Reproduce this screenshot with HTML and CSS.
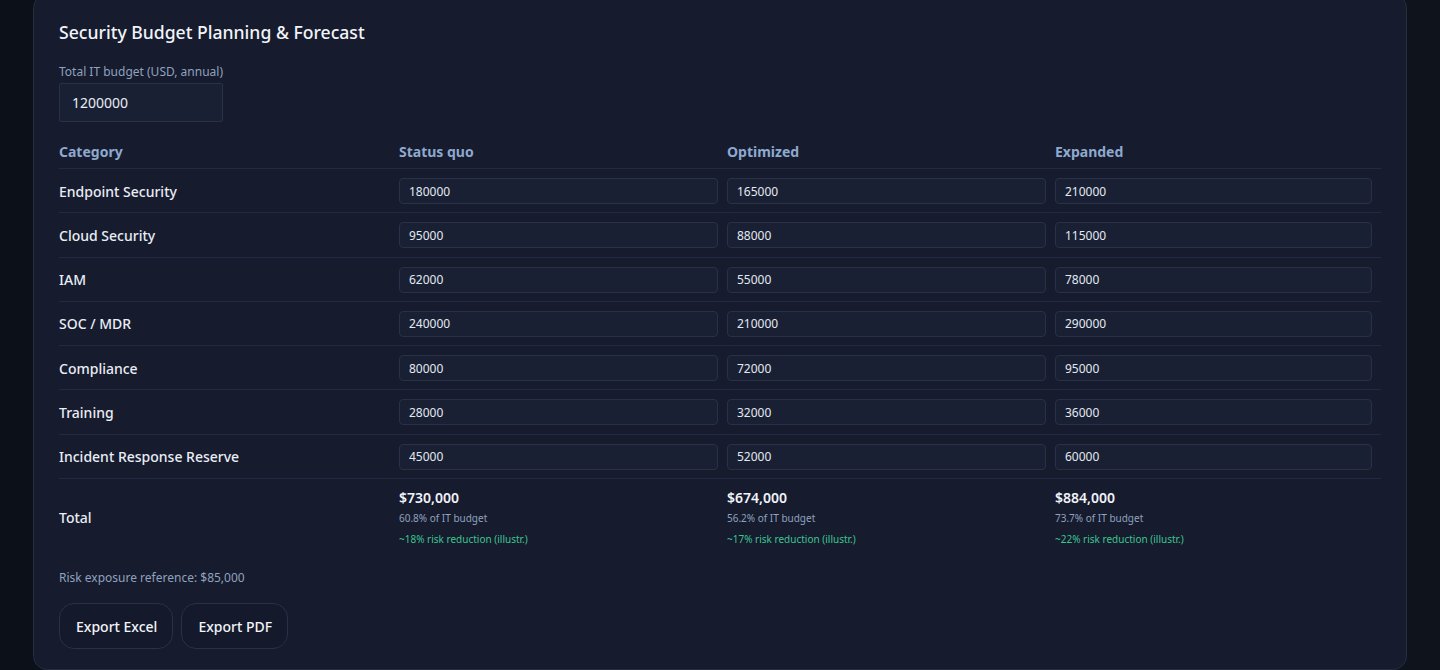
FILE: index.html
```html
<!DOCTYPE html>
<html lang="en">
<head>
    <meta charset="UTF-8">
    <meta name="viewport" content="width=device-width, initial-scale=1.0">
    <title>Security Budget Planning &amp; Forecast</title>
    <link rel="stylesheet" href="styles.css">
</head>
<body>
    <div class="card">
        <h2>Security Budget Planning &amp; Forecast</h2>

        <div class="field">
            <label for="it-budget">Total IT budget (USD, annual)</label>
            <input type="text" id="it-budget" class="budget-input" value="1200000">
        </div>

        <table class="budget-table">
            <colgroup>
                <col class="col-cat">
                <col class="col-val">
                <col class="col-val">
                <col>
            </colgroup>
            <thead>
                <tr>
                    <th>Category</th>
                    <th>Status quo</th>
                    <th>Optimized</th>
                    <th>Expanded</th>
                </tr>
            </thead>
            <tbody>
                <tr>
                    <td class="cat">Endpoint Security</td>
                    <td><input type="text" value="180000"></td>
                    <td><input type="text" value="165000"></td>
                    <td><input type="text" value="210000"></td>
                </tr>
                <tr>
                    <td class="cat">Cloud Security</td>
                    <td><input type="text" value="95000"></td>
                    <td><input type="text" value="88000"></td>
                    <td><input type="text" value="115000"></td>
                </tr>
                <tr>
                    <td class="cat">IAM</td>
                    <td><input type="text" value="62000"></td>
                    <td><input type="text" value="55000"></td>
                    <td><input type="text" value="78000"></td>
                </tr>
                <tr>
                    <td class="cat">SOC / MDR</td>
                    <td><input type="text" value="240000"></td>
                    <td><input type="text" value="210000"></td>
                    <td><input type="text" value="290000"></td>
                </tr>
                <tr>
                    <td class="cat">Compliance</td>
                    <td><input type="text" value="80000"></td>
                    <td><input type="text" value="72000"></td>
                    <td><input type="text" value="95000"></td>
                </tr>
                <tr>
                    <td class="cat">Training</td>
                    <td><input type="text" value="28000"></td>
                    <td><input type="text" value="32000"></td>
                    <td><input type="text" value="36000"></td>
                </tr>
                <tr>
                    <td class="cat">Incident Response Reserve</td>
                    <td><input type="text" value="45000"></td>
                    <td><input type="text" value="52000"></td>
                    <td><input type="text" value="60000"></td>
                </tr>
                <tr class="total-row">
                    <td class="cat">Total</td>
                    <td>
                        <div class="amount">$730,000</div>
                        <div class="share">60.8% of IT budget</div>
                        <div class="risk">~18% risk reduction (illustr.)</div>
                    </td>
                    <td>
                        <div class="amount">$674,000</div>
                        <div class="share">56.2% of IT budget</div>
                        <div class="risk">~17% risk reduction (illustr.)</div>
                    </td>
                    <td>
                        <div class="amount">$884,000</div>
                        <div class="share">73.7% of IT budget</div>
                        <div class="risk">~22% risk reduction (illustr.)</div>
                    </td>
                </tr>
            </tbody>
        </table>

        <p class="note">Risk exposure reference: $85,000</p>

        <div class="actions">
            <button type="button">Export Excel</button>
            <button type="button">Export PDF</button>
        </div>
    </div>
</body>
</html>
```

FILE: styles.css
```css
:root {
    --page-bg: #0e121b;
    --card-bg: #161b2d;
    --card-border: #262d40;
    --input-bg: #1a2033;
    --input-border: #293148;
    --text-color: #e9edf5;
    --muted-color: #8fa2bf;
    --head-color: #8ea9cf;
    --green-color: #3cc493;
    --row-line: #1f2942;
}

body {
    font-family: 'Noto Sans', 'Open Sans', sans-serif;
    background: linear-gradient(90deg, #0c1018 0%, #121624 50%, #0f131c 100%);
    margin: 0;
    color: var(--text-color);
    overflow: hidden;
    height: 670px;
}

.card {
    margin: -6px 33px 0 33px;
    background-color: var(--card-bg);
    border: 1px solid var(--card-border);
    border-radius: 14px;
    padding: 24px 25px 20px 25px;
    min-height: 650px;
    box-sizing: border-box;
}

h2 {
    margin: 0 0 19px 0;
    font-size: 17.6px;
    font-weight: 500;
    line-height: 26px;
    color: #f1f4f9;
}

.field label {
    display: block;
    font-size: 12px;
    line-height: 16px;
    color: var(--muted-color);
    margin-bottom: 3px;
}

.budget-input {
    width: 164px;
    height: 39px;
    box-sizing: border-box;
    background-color: var(--input-bg);
    border: 1px solid var(--input-border);
    border-radius: 2px;
    color: var(--text-color);
    font-family: inherit;
    font-size: 14px;
    padding: 0 12px;
}

.budget-table {
    width: 100%;
    border-collapse: collapse;
    table-layout: fixed;
    margin-top: 14px;
}

.col-cat {
    width: 340px;
}

.col-val {
    width: 328px;
}

.budget-table th {
    text-align: left;
    font-size: 14px;
    font-weight: 700;
    line-height: 17px;
    color: var(--head-color);
    padding: 7px 10px 8px 0;
    border-bottom: 1px solid #232b3f;
}

.budget-table td {
    padding: 9px 9px 8.3px 0;
    border-bottom: 1px solid var(--row-line);
    vertical-align: middle;
}

.budget-table td.cat {
    font-size: 14px;
    font-weight: 500;
    color: var(--text-color);
}

.budget-table input {
    width: 100%;
    height: 26px;
    box-sizing: border-box;
    background-color: var(--input-bg);
    border: 1px solid var(--input-border);
    border-radius: 4px;
    color: #e3e8f1;
    font-family: inherit;
    font-size: 12px;
    padding: 0 9px;
    display: block;
}

.budget-table .total-row td {
    border-bottom: none;
    padding: 9px 10px 10px 0;
}

.amount {
    font-size: 14px;
    font-weight: 600;
    line-height: 20px;
    color: #f1f4f9;
}

.share {
    font-size: 10px;
    line-height: 14px;
    margin-top: 3px;
    color: var(--muted-color);
}

.risk {
    font-size: 10px;
    line-height: 14px;
    margin-top: 7px;
    color: var(--green-color);
}

.note {
    margin: 14px 0 0 0;
    font-size: 12px;
    line-height: 16px;
    color: var(--muted-color);
}

.actions {
    display: flex;
    gap: 8px;
    margin-top: 17px;
}

.actions button {
    height: 46px;
    padding: 0 15px 0 16px;
    background-color: #141a2b;
    border: 1px solid #293148;
    border-radius: 15px;
    color: #f1f4f9;
    font-family: inherit;
    font-size: 14px;
    font-weight: 500;
    cursor: pointer;
}
```
